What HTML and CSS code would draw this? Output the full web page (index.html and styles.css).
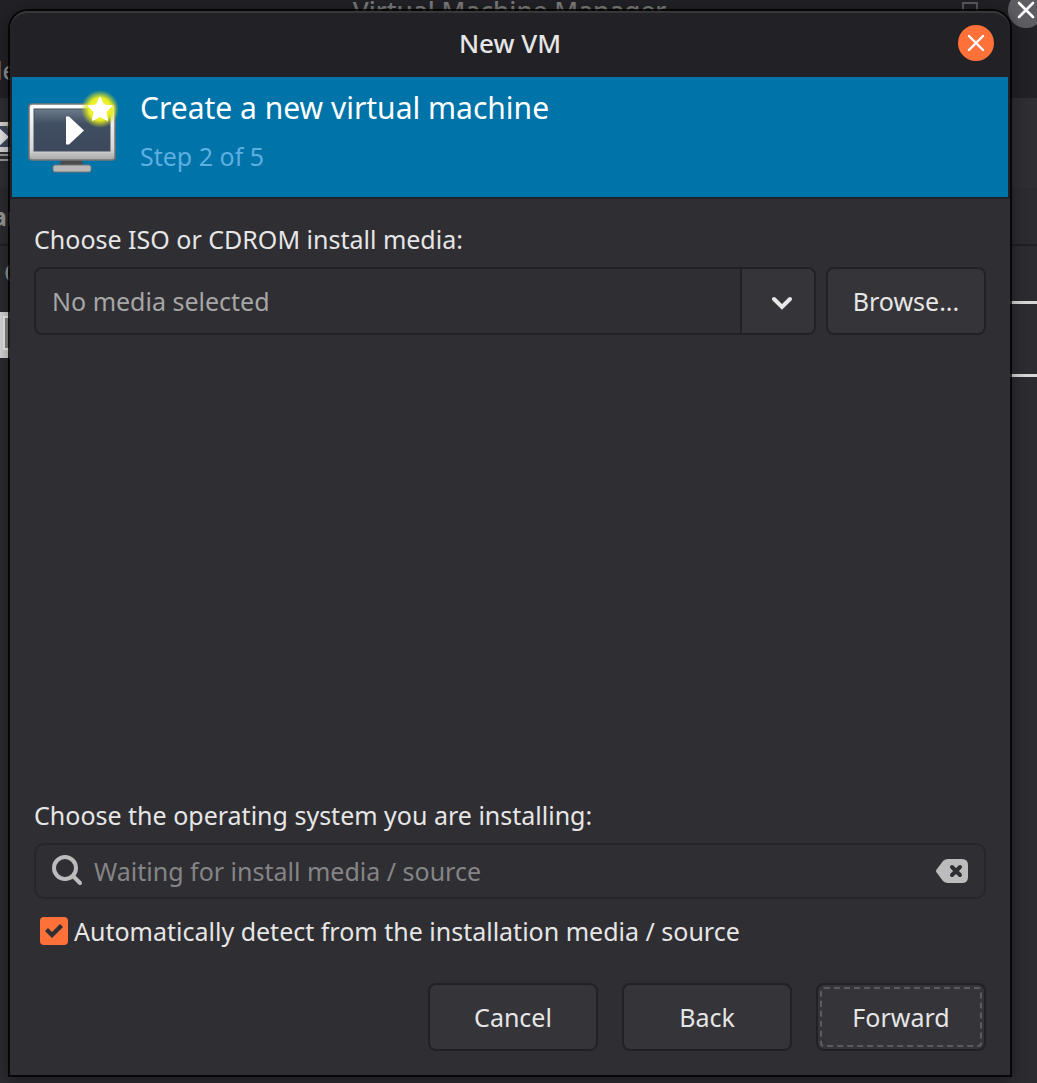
FILE: index.html
```html
<!DOCTYPE html>
<html lang="en">
<head>
<meta charset="utf-8">
<meta name="viewport" content="width=device-width, initial-scale=1">
<title>New VM</title>
<link rel="stylesheet" href="styles.css">
</head>
<body>
<div class="desktop">
  <div class="manager" aria-hidden="true">
    <div class="manager-bar">
      <span class="manager-title">Virtual Machine Manager</span>
      <span class="manager-max"></span>
      <span class="manager-close"><svg viewBox="0 0 36 36" width="36" height="36"><path d="M11 11l14 14M25 11L11 25" stroke="#fff" stroke-width="2.6" stroke-linecap="round"/></svg></span>
      <span class="manager-menu">le</span>
    </div>
    <div class="manager-tools">
      <svg class="manager-icon" viewBox="0 0 12 48" width="12" height="48"><rect x="-20" y="4" width="36" height="30" fill="#d6d6d6"/><rect x="-20" y="8" width="32" height="21" fill="#3f4b5e"/><path d="M-2 9l11 10-11 10z" fill="#e6e6e6"/><path d="M0 37h12M0 42h12" stroke="#999" stroke-width="2"/><circle cx="12" cy="8" r="5" fill="#9a9a20" opacity=".6"/></svg>
    </div>
    <div class="manager-columns">am</div>
    <div class="manager-group">Q</div>
    <div class="manager-row">
      <svg class="manager-vm" viewBox="0 0 12 46" width="12" height="46"><rect width="12" height="46" fill="#d8d8d8"/><rect x="4" y="5" width="10" height="32" fill="#8b8b8b" stroke="#f2f2f2" stroke-width="2"/></svg>
    </div>
  </div>

  <main class="dialog">
    <header class="titlebar">
      <h1 class="title">New VM</h1>
      <button class="close" type="button" aria-label="Close"><svg viewBox="0 0 36 36" width="36" height="36"><path d="M11 11l14 14M25 11L11 25" stroke="#fff" stroke-width="2.4" stroke-linecap="round"/></svg></button>
    </header>

    <section class="banner">
      <svg class="banner-icon" viewBox="0 0 96 96" width="96" height="96" aria-hidden="true">
        <defs>
          <linearGradient id="frame" x1="0" y1="0" x2="0" y2="1"><stop offset="0" stop-color="#fff"/><stop offset=".8" stop-color="#d8d8d8"/><stop offset="1" stop-color="#a8a8a8"/></linearGradient>
          <linearGradient id="screen" x1="0" y1="0" x2="0" y2="1"><stop offset="0" stop-color="#6c7b8a"/><stop offset=".35" stop-color="#414f62"/><stop offset="1" stop-color="#3c485b"/></linearGradient>
          <radialGradient id="glow"><stop offset="0" stop-color="#ffff50"/><stop offset=".6" stop-color="#e8ed20"/><stop offset="1" stop-color="#c8dc20" stop-opacity="0"/></radialGradient>
        </defs>
        <path d="M38 71h19l3 7H35z" fill="#4b4b4b"/>
        <rect x="29" y="77" width="38" height="7" rx="2" fill="#b8b8b8" stroke="#777" stroke-width="1"/>
        <rect x="5" y="16" width="86" height="56" rx="3" fill="url(#frame)" stroke="#777" stroke-width="1.5"/>
        <rect x="10" y="21" width="76" height="42" fill="url(#screen)" stroke="#45505f" stroke-width="1"/>
        <path d="M42 28.500h3l15 14-15 14h-3z" fill="#fff"/>
        <circle cx="76" cy="21" r="19" fill="url(#glow)"/>
        <path d="M76 9l3.700 7.800 8.500 1.200-6.200 6 1.500 8.500-7.500-4-7.500 4 1.500-8.500-6.200-6 8.500-1.200z" fill="#fff" stroke="#fff" stroke-linejoin="round"/>
      </svg>
      <div class="banner-text">
        <h2 class="banner-title">Create a new virtual machine</h2>
        <p class="banner-step">Step 2 of 5</p>
      </div>
    </section>

    <form class="content">
      <label class="caption" for="media">Choose ISO or CDROM install media:</label>
      <div class="media-row">
        <div class="combo">
          <input class="combo-input" id="media" type="text" placeholder="No media selected">
          <button class="combo-arrow" type="button" aria-label="Show media"><svg viewBox="0 0 24 24" width="24" height="24"><path d="M4 8l8 8 8-8" fill="none" stroke="#e8e8e8" stroke-width="4" stroke-linecap="round"/></svg></button>
        </div>
        <button class="button browse" type="button">Browse...</button>
      </div>

      <label class="caption os-caption" for="os">Choose the operating system you are installing:</label>
      <div class="search">
        <svg viewBox="0 0 32 32" width="32" height="32" aria-hidden="true"><circle cx="13" cy="13" r="11" fill="none" stroke="#bcbcbc" stroke-width="4"/><path d="M21 21l7 7" stroke="#bcbcbc" stroke-width="4" stroke-linecap="round"/></svg>
        <input class="search-input" id="os" type="text" placeholder="Waiting for install media / source">
        <button class="clear" type="button" aria-label="Clear"><svg viewBox="0 0 32 24" width="32" height="24"><path d="M12 0h14q6 0 6 6v12q0 6-6 6H12q-3 0-5-2L1 14q-2-2 0-4L7 2q2-2 5-2z" fill="#bcbcbc"/><path d="M16 8l8 8M24 8l-8 8" stroke="#2f2e33" stroke-width="4" stroke-linecap="round"/></svg></button>
      </div>
      <div class="detect">
        <input class="check" id="detect" type="checkbox" checked>
        <label for="detect">Automatically detect from the installation media / source</label>
      </div>

      <div class="actions">
        <button class="button" type="button">Cancel</button>
        <button class="button" type="button">Back</button>
        <button class="button focused" type="button">Forward</button>
      </div>
    </form>
  </main>
</div>
</body>
</html>
```
FILE: styles.css
```css
* { box-sizing: border-box; }

body {
  margin: 0;
  background: #2c2b30;
  color: #e6e6e6;
  font: 25px/32px "Noto Sans", "Open Sans", sans-serif;
}

h1, h2, p { margin: 0; }

button, input { font: inherit; color: inherit; }

button { padding: 0; border: 0; background: none; }

svg { display: block; }

.desktop {
  position: relative;
  display: flex;
  min-height: 100vh;
  padding: 9px 25px 6px 8px;
  overflow: hidden;
}

/* Manager window, behind the dialog */
.manager {
  position: absolute;
  inset: 0;
  overflow: hidden;
  color: #999;
}

.manager-bar {
  position: relative;
  height: 98px;
  background: #222226;
}

.manager-title {
  position: absolute;
  top: -6px;
  left: 0;
  right: 18px;
  text-align: center;
  font-size: 26px;
  font-weight: 500;
  color: #7c7c7c;
}

.manager-max {
  position: absolute;
  top: 2px;
  right: 59px;
  width: 16px;
  height: 16px;
  border: 2px solid #59595c;
}

.manager-close {
  position: absolute;
  top: -8px;
  right: -7px;
  border-radius: 50%;
  background: #5e5d62;
}

.manager-menu {
  position: absolute;
  top: 54px;
  left: -4px;
}

.manager-tools {
  height: 90px;
  padding-top: 20px;
  background: #2f2e33;
}

.manager-columns {
  height: 58px;
  padding-top: 12px;
  border-bottom: 2px solid #202023;
  margin-left: -8px;
  font-weight: 700;
}

.manager-group {
  height: 55px;
  padding: 10px 0 0 4px;
}

.manager-row {
  height: 76px;
  margin-left: 12px;
  padding-top: 8px;
  border: 3px solid #d8d6d6;
  border-width: 3px 0;
  background: #2d2c31;
}

.manager-vm { margin-left: -12px; }

/* Dialog */
.dialog {
  position: relative;
  display: flex;
  flex: 1;
  flex-direction: column;
  border: 2px solid rgba(0, 0, 0, 0.8);
  border-radius: 20px 20px 0 0;
  background: #2f2e33;
  background-clip: padding-box;
  box-shadow: 0 2px 16px rgba(0, 0, 0, 0.4);
}

.titlebar {
  display: grid;
  grid-template-columns: 36px 1fr 36px;
  align-items: center;
  height: 66px;
  padding: 0 16px 4px;
  border-top: 2px solid #37373a;
  border-radius: 18px 18px 0 0;
  background: #222226;
}

.title {
  grid-column: 2;
  font-size: 26px;
  font-weight: 500;
  text-align: center;
}

.close {
  width: 36px;
  height: 36px;
  border-radius: 50%;
  background: #ff7139;
}

.banner {
  display: flex;
  gap: 20px;
  height: 122px;
  padding: 11px 12px;
  border: 2px solid #222226;
  border-top: 0;
  background: #0073a9;
}

.banner-text {
  display: flex;
  flex-direction: column;
  gap: 12px;
}

.banner-title {
  font-size: 30px;
  font-weight: 400;
  line-height: 40px;
  color: #fff;
}

.banner-step { color: #5cafe0; }

.content {
  display: flex;
  flex: 1;
  flex-direction: column;
  padding: 24px;
}

.caption { margin-bottom: 12px; }

.os-caption { margin-top: auto; }

.media-row {
  display: flex;
  gap: 10px;
}

.combo {
  display: flex;
  flex: 1;
  height: 68px;
  border: 2px solid #222226;
  border-radius: 8px;
}

.combo-input {
  flex: 1;
  min-width: 0;
  padding: 0 16px;
  border: 0;
  background: none;
}

.combo-input::placeholder { color: #a6a6a6; }

.combo-arrow {
  display: grid;
  place-items: center;
  width: 74px;
  padding: 4px 0 0 8px;
  border-left: 2px solid #222226;
  border-radius: 0 6px 6px 0;
  background: #353438;
}

.button {
  width: 170px;
  height: 68px;
  border: 2px solid #222226;
  border-radius: 8px;
  background: #353438;
}

.browse { width: 160px; }

.focused {
  outline: 2px dashed #5c5b60;
  outline-offset: -6px;
}

.search {
  display: flex;
  align-items: center;
  gap: 10px;
  height: 56px;
  padding: 0 16px;
  border: 2px solid #27272b;
  border-radius: 10px;
}

.search-input {
  flex: 1;
  min-width: 0;
  padding: 0;
  border: 0;
  background: none;
}

.search-input::placeholder { color: #858587; }

.detect {
  display: flex;
  align-items: center;
  gap: 6px;
  margin: 16px 0 36px;
  padding-left: 6px;
}

.check {
  appearance: none;
  display: grid;
  place-items: center;
  width: 28px;
  height: 28px;
  margin: 0;
  border-radius: 4px;
  background: #ff7139;
}

.check:checked::before {
  content: "";
  width: 18px;
  height: 14px;
  background: #2f2e33;
  clip-path: polygon(0 7px, 3px 4px, 7px 8px, 15px 0, 18px 3px, 7px 14px);
}

.actions {
  display: flex;
  justify-content: flex-end;
  gap: 24px;
}
```
